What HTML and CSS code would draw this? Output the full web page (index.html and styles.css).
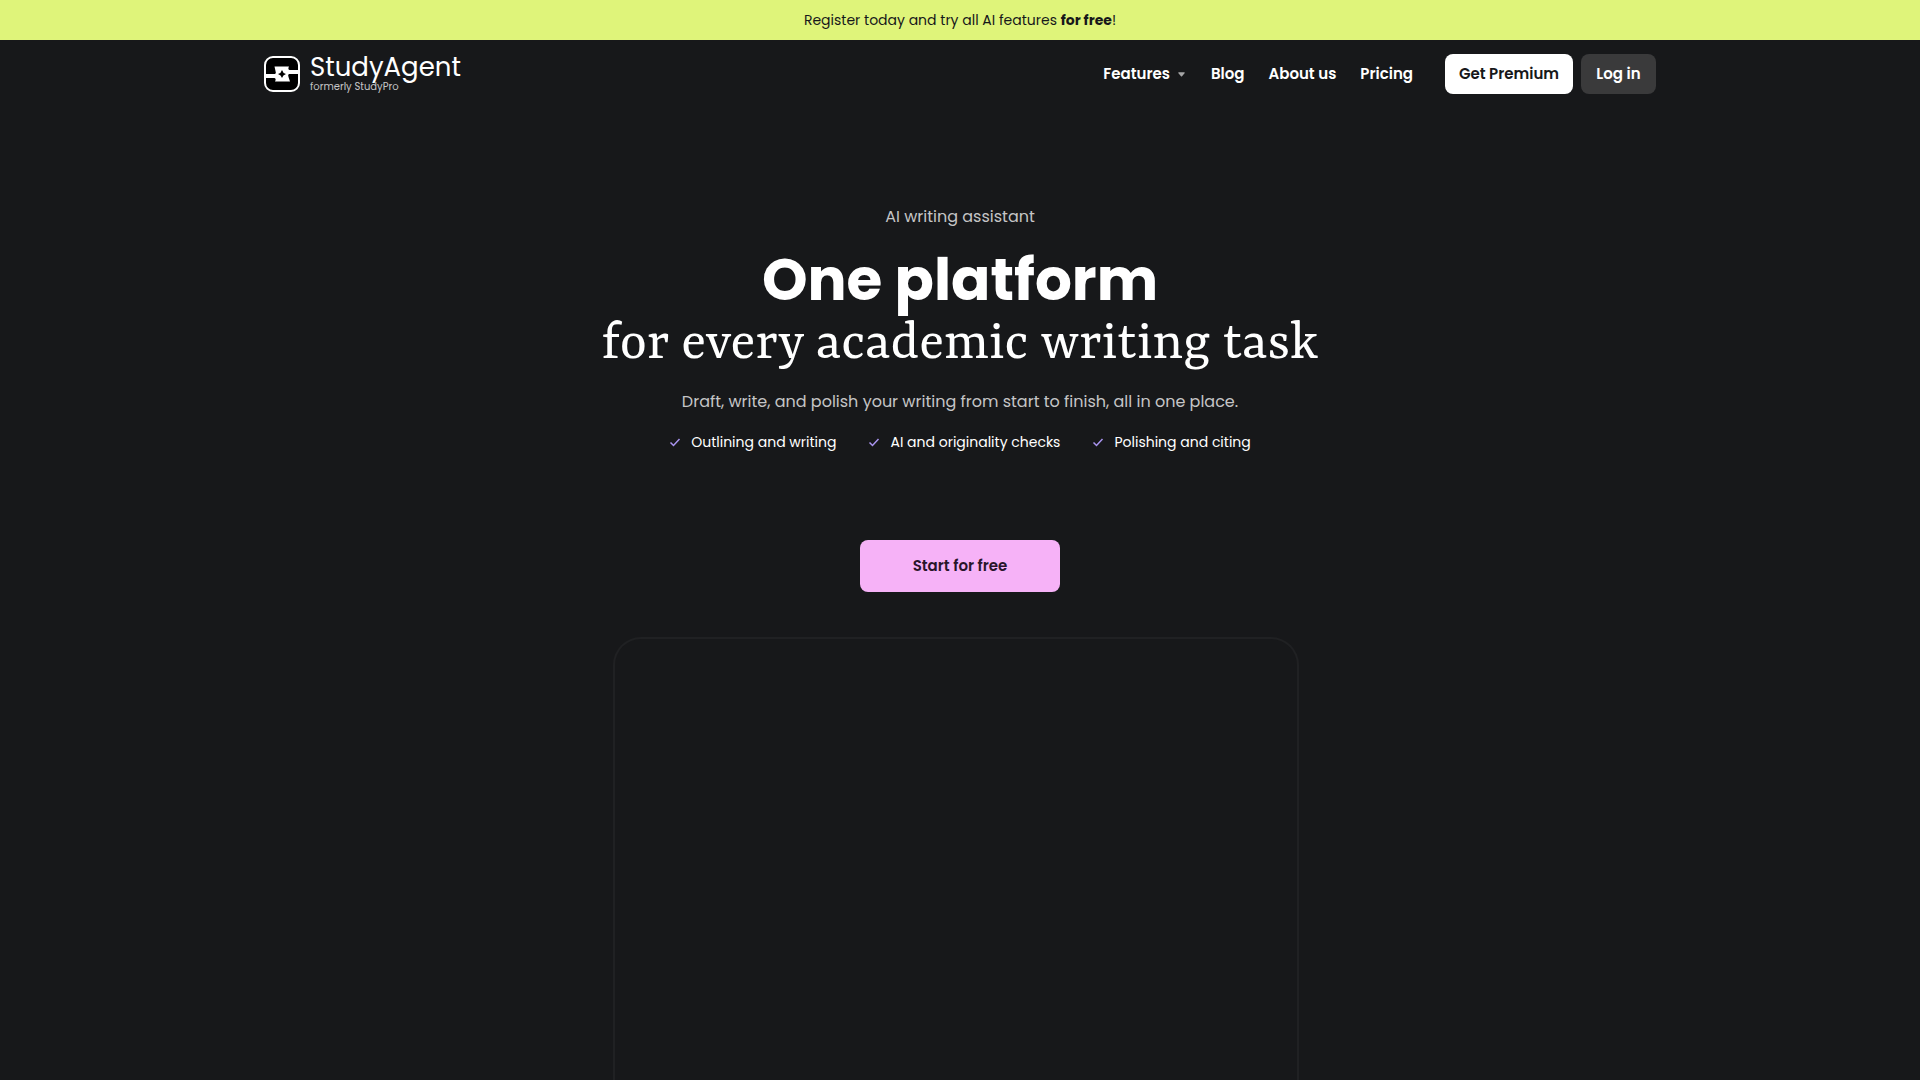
FILE: index.html
```html
<!DOCTYPE html>
<html lang="en">
<head>
<meta charset="utf-8">
<meta name="viewport" content="width=device-width, initial-scale=1">
<title>StudyAgent</title>
<link rel="stylesheet" href="styles.css">
</head>
<body>
<p class="promo">Register today and try all AI features <strong>for free</strong>!</p>
<header class="header">
  <a class="brand" href="#">
    <svg class="brand-mark" viewBox="0 0 36 36" aria-hidden="true">
      <rect x="1" y="1" width="34" height="34" rx="8" fill="#000" stroke="#fff" stroke-width="2"/>
      <path fill="#fff" d="M10.500 10.500H25Q23.500 13.500 25.500 14H35V18H25Q23.500 18.500 24.500 21L26 25.500H11Q12.500 22.500 10.500 22H1V18H11Q12.500 17.500 11.500 15Z"/>
      <path fill="#000" d="M18 14Q18.800 17.200 22 18Q18.800 18.800 18 22Q17.200 18.800 14 18Q17.200 17.200 18 14Z"/>
    </svg>
    <span class="brand-text">
      <span class="brand-name">StudyAgent</span>
      <span class="brand-note">formerly StudyPro</span>
    </span>
  </a>
  <nav class="nav" aria-label="Main">
    <button class="nav-item nav-menu" type="button">Features
      <svg class="caret" viewBox="0 0 8 5" aria-hidden="true"><path fill="#a5a5a6" d="M1 0H7Q8.500 0 7.500 1L4.600 4.500Q4 5 3.400 4.500L.5 1Q-.5 0 1 0Z"/></svg>
    </button>
    <a class="nav-item" href="#">Blog</a>
    <a class="nav-item" href="#">About us</a>
    <a class="nav-item" href="#">Pricing</a>
  </nav>
  <div class="actions">
    <button class="btn btn-premium" type="button">Get Premium</button>
    <button class="btn btn-login" type="button">Log in</button>
  </div>
</header>
<main class="hero">
  <p class="kicker">AI writing assistant</p>
  <h1 class="title"><span class="title-strong">One platform</span><span class="title-serif">for every academic writing task</span></h1>
  <p class="lead">Draft, write, and polish your writing from start to finish, all in one place.</p>
  <ul class="points">
    <li class="point"><svg class="check" viewBox="0 0 12 12" aria-hidden="true"><path d="M1.500 6.500L4.500 9.500L10.500 3"/></svg>Outlining and writing</li>
    <li class="point"><svg class="check" viewBox="0 0 12 12" aria-hidden="true"><path d="M1.500 6.500L4.500 9.500L10.500 3"/></svg>AI and originality checks</li>
    <li class="point"><svg class="check" viewBox="0 0 12 12" aria-hidden="true"><path d="M1.500 6.500L4.500 9.500L10.500 3"/></svg>Polishing and citing</li>
  </ul>
  <button class="btn btn-start" type="button">Start for free</button>
  <div class="frame"></div>
</main>
</body>
</html>
```
FILE: styles.css
```css
* { box-sizing: border-box; }
body {
  margin: 0;
  min-height: 100vh;
  display: flex;
  flex-direction: column;
  background: #17181a;
  color: #fff;
  font-family: Poppins, Inter, sans-serif;
  font-size: 14px;
  line-height: 20px;
}
p, h1, ul { margin: 0; padding: 0; }
a { color: inherit; text-decoration: none; }
button { border: 0; font: inherit; color: inherit; cursor: pointer; }
.promo {
  padding: 10px 16px;
  background: #dff47a;
  color: #17181a;
  text-align: center;
}
.header {
  width: 100%;
  max-width: 1440px;
  margin: 0 auto;
  padding: 14px 24px;
  display: flex;
  align-items: center;
}
.brand { display: flex; align-items: center; gap: 10px; margin-right: auto; }
.brand-mark { width: 36px; height: 36px; }
.brand-text { display: flex; flex-direction: column; }
.brand-name { font-size: 26px; line-height: 26px; }
.brand-note { font-size: 10px; line-height: 14px; color: #c5c5c6; }
.nav { display: flex; gap: 24px; margin-right: 32px; font-weight: 600; }
.nav, .btn { font-size: 15px; }
.nav-item { padding: 0; background: none; white-space: nowrap; }
.nav-menu { display: flex; align-items: center; gap: 8px; margin-right: 2px; }
.caret { width: 7px; height: 5px; }
.actions { display: flex; gap: 8px; }
.btn { padding: 0 8px; border-radius: 8px; font-weight: 600; white-space: nowrap; }
.btn-premium { min-width: 128px; height: 40px; background: #fff; color: #17181a; }
.btn-login { min-width: 75px; height: 40px; background: #3a3a3b; }
.hero {
  flex: 1;
  display: flex;
  flex-direction: column;
  align-items: center;
  padding: 97px 24px 0;
  text-align: center;
}
.kicker, .lead { font-size: 16px; line-height: 24px; color: #c5c5c6; }
.title { padding: 20px 0 11px; font-weight: 400; }
.title span { display: block; }
.title-strong { font-size: 58px; font-weight: 700; line-height: 62px; }
.title-serif { font-family: Yrsa, "Liberation Serif", serif; font-size: 58px; line-height: 68px; }
.points { display: flex; flex-wrap: wrap; justify-content: center; gap: 32px; padding-top: 18px; list-style: none; }
.point { display: flex; align-items: center; gap: 10px; }
.check { width: 12px; height: 12px; fill: none; stroke: #a994ef; stroke-width: 1.500; }
.btn-start { width: 200px; height: 52px; margin-top: 88px; background: #f6b2f7; color: #29152b; }
.frame {
  flex: 1;
  width: 100%;
  max-width: 686px;
  min-height: 442px;
  margin: 45px 8px 0 0;
  border: 2px solid #202123;
  border-bottom: 0;
  border-radius: 28px 28px 0 0;
}
```
